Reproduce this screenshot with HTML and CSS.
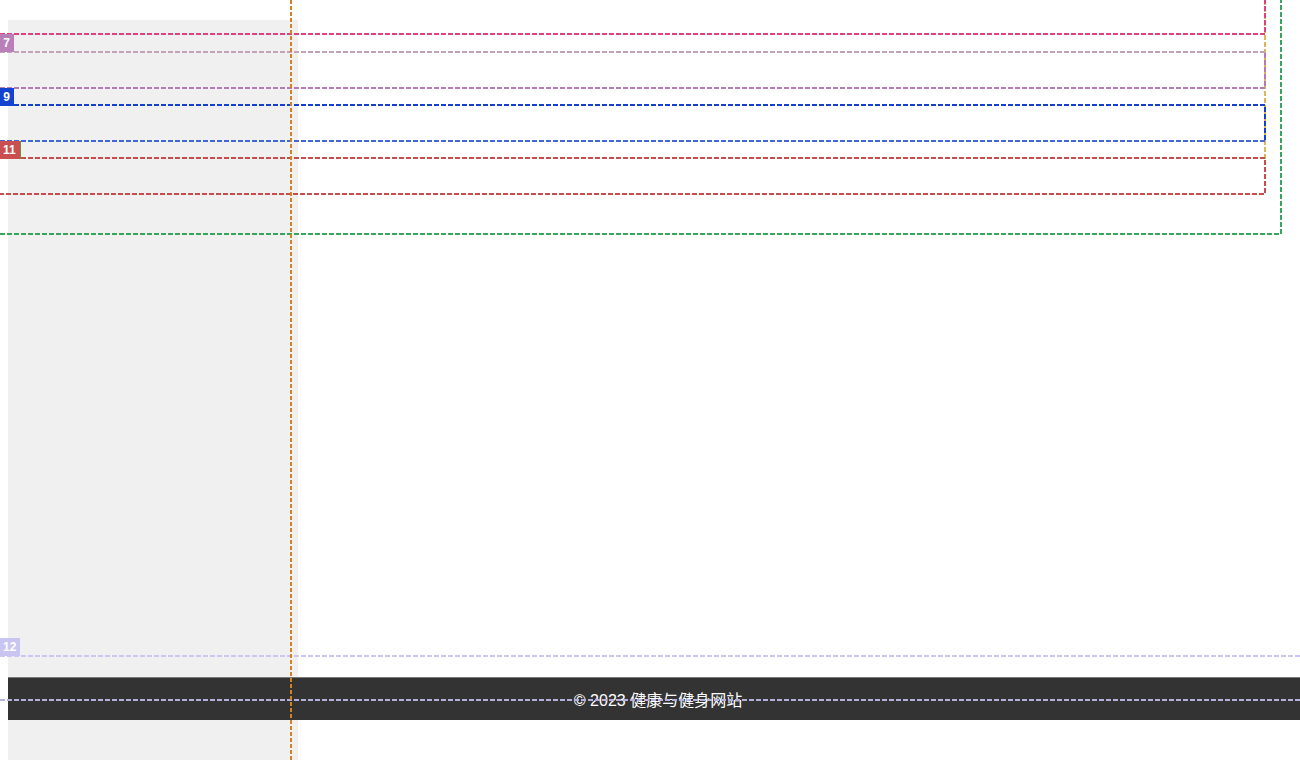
FILE: index.html
```html
<!DOCTYPE html>
<html lang="zh-CN">
<head>
<meta charset="utf-8">
<title>健康与健身网站</title>
<link rel="stylesheet" href="styles.css">
</head>
<body>
<div class="page">
  <aside class="sidebar"></aside>
  <main class="content"></main>
  <footer class="footer">© 2023 健康与健身网站</footer>
</div>

<div class="overlay">
  <svg class="guides" width="1300" height="760" viewBox="0 0 1300 760" xmlns="http://www.w3.org/2000/svg">
    <g fill="none" stroke-width="2" stroke-dasharray="5 2">
      <path d="M1265 0 V160" stroke="#e0b45a"/>
      <path d="M0 34 H1265 V0" stroke="#e0407e"/>
      <path d="M0 52 H1265" stroke="#c6a2ba"/>
      <path d="M0 88 H1265 V52" stroke="#b57ab5"/>
      <path d="M0 105 H1265 V141" stroke="#1440d2"/>
      <path d="M0 141 H1265" stroke="#3f66da"/>
      <path d="M0 158 H1265 V194 H0" stroke="#c94c4c"/>
      <path d="M0 234 H1281 V0" stroke="#38a65a"/>
      <path d="M0 656 H1300" stroke="#cac6f4"/>
      <path d="M0 700 H1300" stroke="#b4b0dc"/>
      <path d="M291 0 V760" stroke="#d4821c" stroke-dasharray="4 2"/>
    </g>
  </svg>
  <span class="tag tag-7">7</span>
  <span class="tag tag-9">9</span>
  <span class="tag tag-11">11</span>
  <span class="tag tag-12">12</span>
</div>
</body>
</html>
```

FILE: styles.css
```css
html {
  overflow: hidden;
}

body {
  margin: 0;
  background: #ffffff;
  font-family: "Liberation Sans", "Noto Sans CJK SC", sans-serif;
}

.page {
  display: grid;
  grid-template-columns: 290px 1fr;
  grid-template-rows: 657px 43px 40px;
  width: 1300px;
  padding: 20px 0 0 8px;
}

.sidebar {
  grid-column: 1;
  grid-row: 1 / 4;
  background: #f0f0f0;
}

.content {
  grid-column: 2;
  grid-row: 1;
}

.footer {
  grid-column: 1 / 3;
  grid-row: 2;
  z-index: 1;
  background: #333333;
  border-top: 1px solid #7a7a7a;
  color: #ffffff;
  font-size: 16px;
  display: flex;
  align-items: center;
  justify-content: center;
}

.overlay {
  position: absolute;
  top: 0;
  left: 0;
  width: 1300px;
  height: 760px;
  pointer-events: none;
  z-index: 10;
}

.guides {
  position: absolute;
  top: 0;
  left: 0;
  display: block;
}

.tag {
  position: absolute;
  left: 0;
  height: 18px;
  padding: 0 4px 0 3px;
  box-sizing: border-box;
  min-width: 14px;
  color: #ffffff;
  font-family: "Liberation Sans", sans-serif;
  font-size: 12px;
  font-weight: bold;
  line-height: 18px;
  text-align: center;
}

.tag-7 {
  top: 34px;
  background: #b97fb9;
}

.tag-9 {
  top: 88px;
  background: #1442d0;
}

.tag-11 {
  top: 141px;
  background: #cc4f4f;
  border-right: 1px solid #5a9a40;
}

.tag-12 {
  top: 638px;
  background: #c9c5f2;
}
```
